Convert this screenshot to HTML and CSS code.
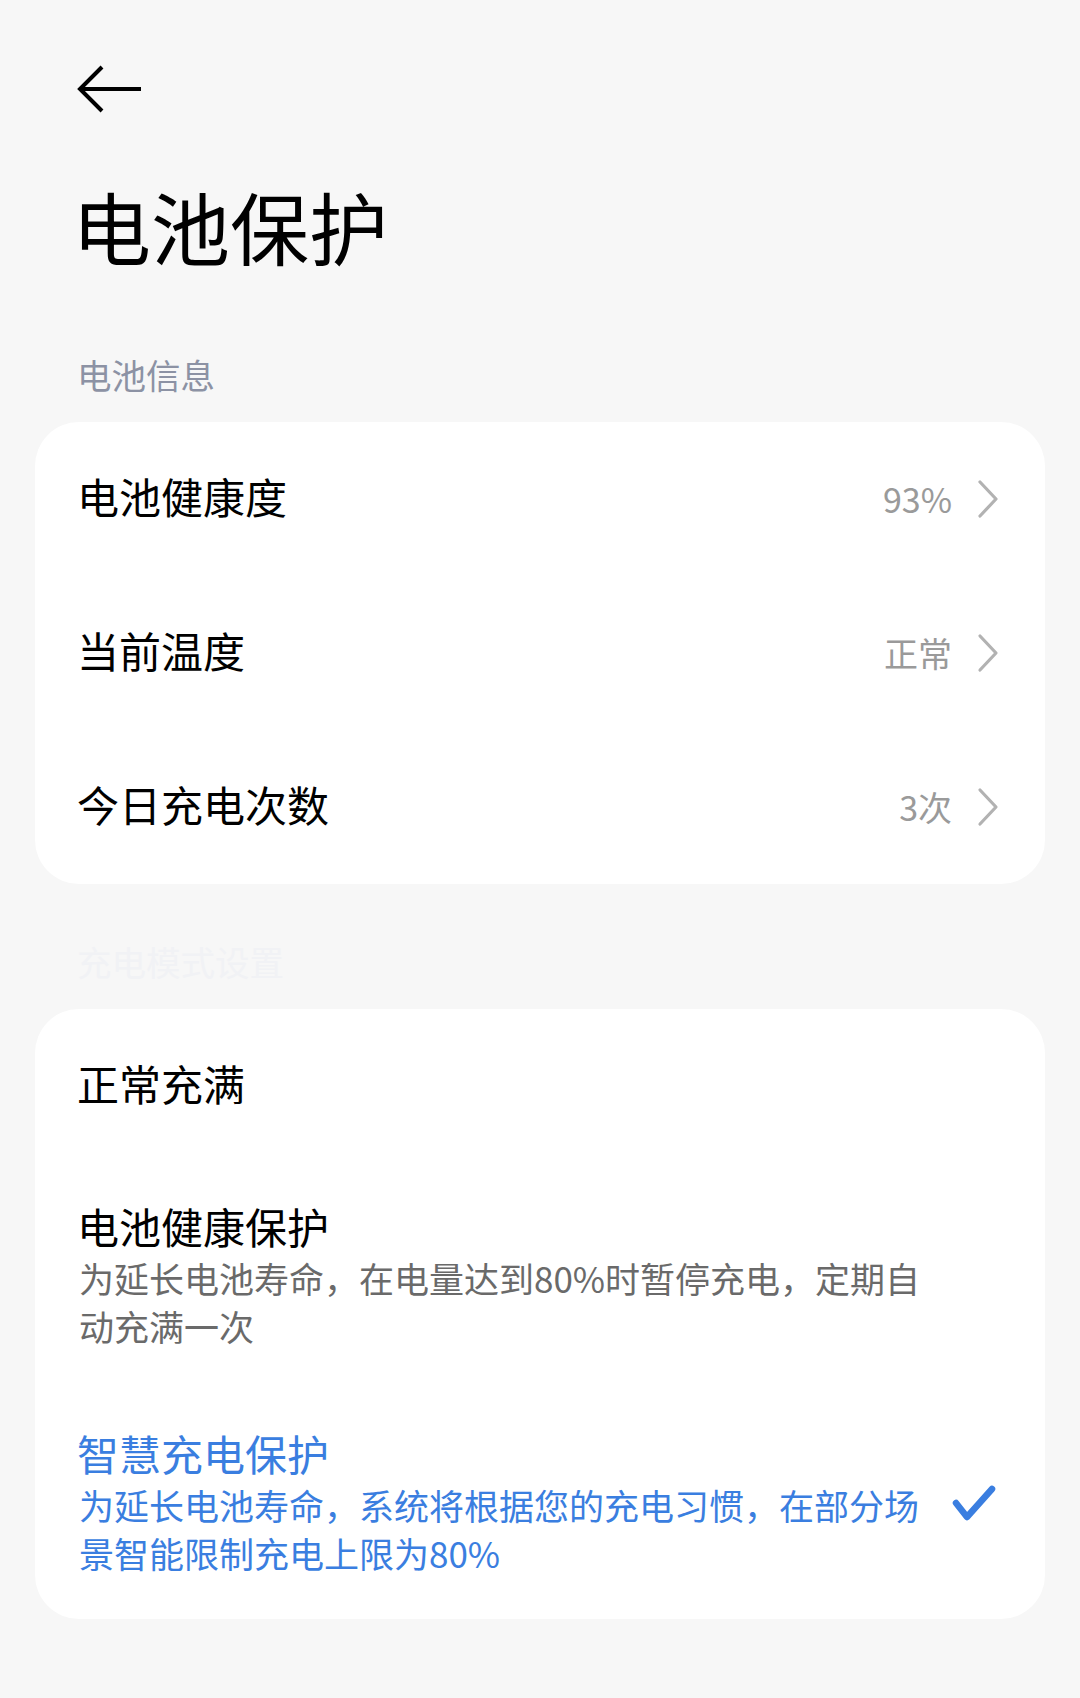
FILE: index.html
```html
<!DOCTYPE html>
<html lang="zh-CN">
<head>
<meta charset="utf-8">
<title>电池保护</title>
<link rel="stylesheet" href="styles.css">
</head>
<body>
<div class="page">
  <header class="topbar">
    <svg class="back" width="68" height="50" viewBox="0 0 68 50" aria-label="返回">
      <path d="M4 25 H65 M26 3 L4 25 L26 47" fill="none" stroke="#000" stroke-width="4"/>
    </svg>
  </header>
  <h1 class="title">电池保护</h1>

  <div class="section-label">电池信息</div>
  <section class="card">
    <div class="row">
      <span class="row-label">电池健康度</span>
      <span class="row-right"><span class="value">93%</span>
        <svg class="chev" width="24" height="40" viewBox="0 0 24 40"><path d="M4 3 L20 20 L4 37" fill="none" stroke="#b2b2b2" stroke-width="3.2" stroke-linecap="round" stroke-linejoin="round"/></svg>
      </span>
    </div>
    <div class="row">
      <span class="row-label">当前温度</span>
      <span class="row-right"><span class="value">正常</span>
        <svg class="chev" width="24" height="40" viewBox="0 0 24 40"><path d="M4 3 L20 20 L4 37" fill="none" stroke="#b2b2b2" stroke-width="3.2" stroke-linecap="round" stroke-linejoin="round"/></svg>
      </span>
    </div>
    <div class="row">
      <span class="row-label">今日充电次数</span>
      <span class="row-right"><span class="value">3次</span>
        <svg class="chev" width="24" height="40" viewBox="0 0 24 40"><path d="M4 3 L20 20 L4 37" fill="none" stroke="#b2b2b2" stroke-width="3.2" stroke-linecap="round" stroke-linejoin="round"/></svg>
      </span>
    </div>
  </section>

  <div class="section-label faint">充电模式设置</div>
  <section class="card">
    <div class="row">
      <span class="row-label">正常充满</span>
    </div>
    <div class="opt opt-b">
      <div class="opt-text">
        <div class="opt-title">电池健康保护</div>
        <div class="opt-desc">为延长电池寿命，在电量达到80%时暂停充电，定期自动充满一次</div>
      </div>
    </div>
    <div class="opt opt-c selected">
      <div class="opt-text">
        <div class="opt-title">智慧充电保护</div>
        <div class="opt-desc">为延长电池寿命，系统将根据您的充电习惯，在部分场景智能限制充电上限为80%</div>
      </div>
      <svg class="check" width="48" height="42" viewBox="0 0 48 42"><path d="M6 21 L17 35 L42 7" fill="none" stroke="#3a7ee0" stroke-width="6.5" stroke-linecap="round" stroke-linejoin="round"/></svg>
    </div>
  </section>
</div>
</body>
</html>
```

FILE: styles.css
```css
html, body {
  margin: 0;
  padding: 0;
  background: #f7f7f7;
}
body {
  width: 1080px;
  height: 1698px;
  font-family: "Noto Sans CJK SC", "Noto Sans", sans-serif;
  color: #000;
}
.page {
  padding: 0 35px;
}
.topbar {
  padding-top: 64px;
  height: 50px;
}
.back {
  display: block;
  margin-left: 41px;
}
.title {
  margin: 66px 0 0 37px;
  font-size: 79px;
  font-weight: 400;
  line-height: 92px;
}
.section-label {
  margin: 80px 0 0 42px;
  font-size: 34.5px;
  line-height: 44px;
  color: #8c92a4;
}
.section-label.faint {
  margin-top: 55px;
  color: #f1f2f5;
}
.card {
  margin-top: 26px;
  background: #fff;
  border-radius: 44px;
  overflow: hidden;
}
.row {
  box-sizing: border-box;
  height: 154px;
  display: flex;
  align-items: center;
  justify-content: space-between;
  padding: 0 45px 7px 42px;
}
.row-label {
  font-size: 42px;
  font-weight: 400;
  line-height: 52px;
}
.row-right {
  display: flex;
  align-items: center;
  gap: 24px;
  margin-top: 7px;
}
.value {
  font-size: 34px;
  color: #9a9a9a;
  line-height: 44px;
}
.chev {
  display: block;
}
.opt {
  display: flex;
  align-items: center;
  padding: 0 47px 0 44px;
}
.opt-b {
  padding-top: 35px;
  padding-bottom: 42px;
}
.opt-c {
  padding-top: 33px;
  padding-bottom: 42px;
}
.opt-text {
  width: 856px;
}
.opt-title {
  margin-left: -2px;
  font-size: 42px;
  font-weight: 400;
  line-height: 56px;
}
.opt-desc {
  font-size: 35px;
  line-height: 48px;
  color: #6a6a6a;
}
.selected .opt-title,
.selected .opt-desc {
  color: #3a7ee0;
}
.check {
  display: block;
  margin-left: auto;
  margin-top: 4px;
}
```
